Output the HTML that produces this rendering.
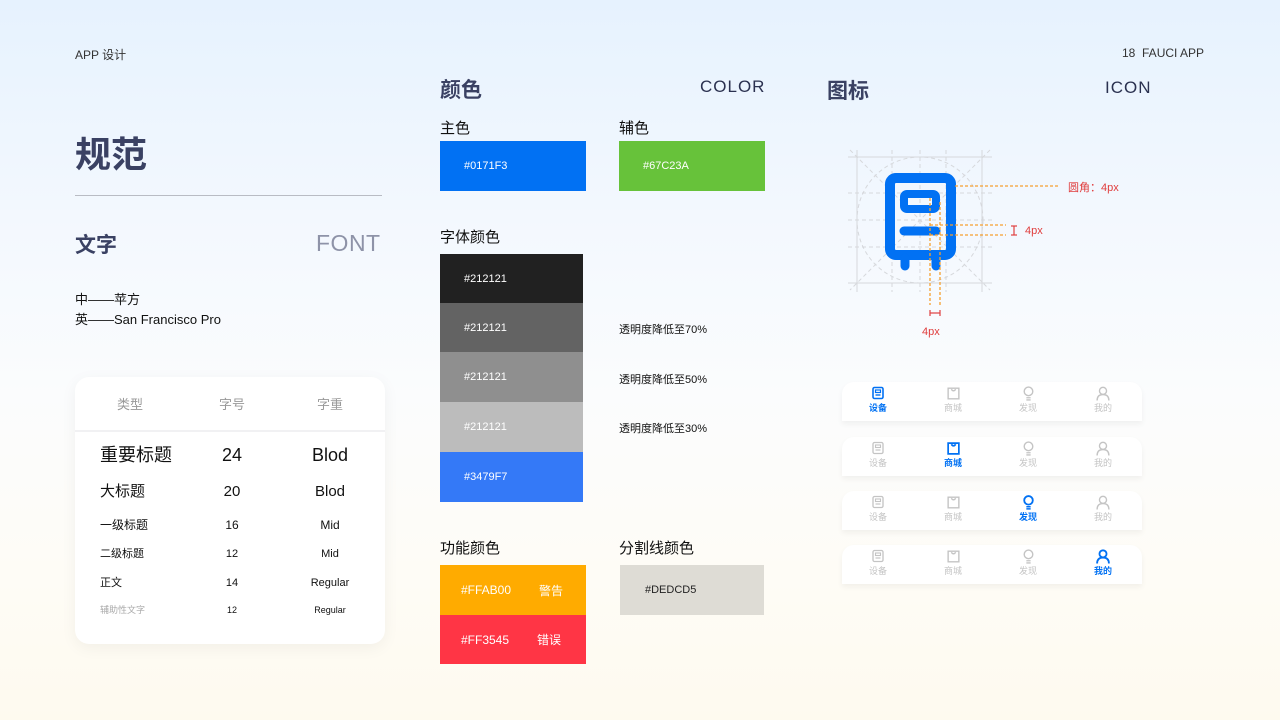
<!DOCTYPE html>
<html><head><meta charset="utf-8">
<style>
*{margin:0;padding:0;box-sizing:border-box}
body{width:1280px;height:720px;position:relative;overflow:hidden;font-family:"Liberation Sans","Noto Sans CJK SC",sans-serif;background:linear-gradient(180deg,#e6f2fe 0%,#f3f8fe 30%,#fbfcfd 55%,#fefcf6 80%,#fefaef 100%);color:#111}
.a{position:absolute;white-space:nowrap}
.h{font-weight:bold;color:#3a4163}
.sw{position:absolute;color:#fff;font-size:11px;display:flex;align-items:center}
.card{position:absolute;left:75px;top:377px;width:310px;height:267px;background:#fff;border-radius:14px;box-shadow:0 4px 16px rgba(0,0,0,0.05)}
.card div{line-height:var(--lh)}
.tc{position:absolute;text-align:center;transform:translateX(-50%)}
.tab{position:absolute;left:842px;width:300px;height:39px;background:#fff;border-radius:12px 12px 0 0;box-shadow:0 3px 6px rgba(0,0,0,0.05)}
.ti{position:absolute;width:40px;margin-left:-20px;text-align:center;font-size:9px;color:#c4c4c4;top:1px}
.ti svg{display:block;margin:3px auto 0}
.ti.on{color:#0171f3;font-weight:bold}
</style></head><body>
<div class="a" style="left:75px;top:46px;font-size:12px;color:#333">APP 设计</div>
<div class="a" style="left:1122px;top:46px;font-size:12px;color:#333">18&nbsp; FAUCI APP</div>
<div class="a h" style="left:75px;top:133px;font-size:36px;line-height:44px">规范</div>
<div class="a" style="left:75px;top:195px;width:307px;height:1px;background:#b9bcc4"></div>
<div class="a h" style="left:75px;top:229px;font-size:21px">文字</div>
<div class="a" style="left:316px;top:230px;font-size:23px;color:#8e93a8;letter-spacing:0.5px">FONT</div>
<div class="a" style="left:75px;top:290px;font-size:13px;line-height:20px">中——苹方<br>英——San Francisco Pro</div>

<div class="card">
<div class="tc" style="left:55px;top:20px;font-size:13px;color:#999;--lh:16px">类型</div>
<div class="tc" style="left:157px;top:20px;font-size:13px;color:#999;--lh:16px">字号</div>
<div class="tc" style="left:255px;top:20px;font-size:13px;color:#999;--lh:16px">字重</div>
<div style="position:absolute;left:0;right:0;top:53px;height:2px;background:#f1f1f3"></div>
<div class="a" style="left:25px;top:66px;font-size:18px;--lh:24px">重要标题</div>
<div class="tc" style="left:157px;top:66px;font-size:18px;--lh:24px">24</div>
<div class="tc" style="left:255px;top:66px;font-size:18px;--lh:24px">Blod</div>
<div class="a" style="left:25px;top:105px;font-size:15px;--lh:20px">大标题</div>
<div class="tc" style="left:157px;top:105px;font-size:15px;--lh:20px">20</div>
<div class="tc" style="left:255px;top:105px;font-size:15px;--lh:20px">Blod</div>
<div class="a" style="left:25px;top:140px;font-size:12px;--lh:16px">一级标题</div>
<div class="tc" style="left:157px;top:140px;font-size:12px;--lh:16px">16</div>
<div class="tc" style="left:255px;top:140px;font-size:12px;--lh:16px">Mid</div>
<div class="a" style="left:25px;top:170px;font-size:11px;--lh:14px">二级标题</div>
<div class="tc" style="left:157px;top:170px;font-size:11px;--lh:14px">12</div>
<div class="tc" style="left:255px;top:170px;font-size:11px;--lh:14px">Mid</div>
<div class="a" style="left:25px;top:199px;font-size:11px;--lh:14px">正文</div>
<div class="tc" style="left:157px;top:199px;font-size:11px;--lh:14px">14</div>
<div class="tc" style="left:255px;top:199px;font-size:11px;--lh:14px">Regular</div>
<div class="a" style="left:25px;top:227px;font-size:9px;color:#aaa;--lh:12px">辅助性文字</div>
<div class="tc" style="left:157px;top:227px;font-size:9px;--lh:12px">12</div>
<div class="tc" style="left:255px;top:227px;font-size:9px;--lh:12px">Regular</div>
</div>

<div class="a h" style="left:440px;top:74px;font-size:21px">颜色</div>
<div class="a" style="left:700px;top:77px;font-size:17px;color:#2b3150;letter-spacing:1px">COLOR</div>
<div class="a" style="left:440px;top:117px;font-size:15px">主色</div>
<div class="a" style="left:619px;top:117px;font-size:15px">辅色</div>
<div class="sw" style="left:440px;top:141px;width:146px;height:50px;background:#0171f3;padding-left:24px">#0171F3</div>
<div class="sw" style="left:619px;top:141px;width:146px;height:50px;background:#67c23a;padding-left:24px">#67C23A</div>
<div class="a" style="left:440px;top:226px;font-size:15px">字体颜色</div>
<div class="sw" style="left:440px;top:254px;width:143px;height:49px;background:#212121;padding-left:24px">#212121</div>
<div class="sw" style="left:440px;top:303px;width:143px;height:49px;background:#636363;padding-left:24px">#212121</div>
<div class="sw" style="left:440px;top:352px;width:143px;height:50px;background:#8f8f8f;padding-left:24px">#212121</div>
<div class="sw" style="left:440px;top:402px;width:143px;height:50px;background:#bcbcbc;padding-left:24px">#212121</div>
<div class="sw" style="left:440px;top:452px;width:143px;height:50px;background:#3479f7;padding-left:24px">#3479F7</div>
<div class="a" style="left:619px;top:321px;font-size:11px">透明度降低至70%</div>
<div class="a" style="left:619px;top:371px;font-size:11px">透明度降低至50%</div>
<div class="a" style="left:619px;top:420px;font-size:11px">透明度降低至30%</div>
<div class="a" style="left:440px;top:537px;font-size:15px">功能颜色</div>
<div class="a" style="left:619px;top:537px;font-size:15px">分割线颜色</div>
<div class="sw" style="left:440px;top:565px;width:146px;height:50px;background:#ffab00;padding-left:21px;font-size:12px">#FFAB00<span style="margin-left:28px">警告</span></div>
<div class="sw" style="left:440px;top:615px;width:146px;height:49px;background:#ff3545;padding-left:21px;font-size:12px">#FF3545<span style="margin-left:28px">错误</span></div>
<div class="sw" style="left:620px;top:565px;width:144px;height:50px;background:#dedcd5;color:#222;padding-left:25px">#DEDCD5</div>

<div class="a h" style="left:827px;top:75px;font-size:21px">图标</div>
<div class="a" style="left:1105px;top:78px;font-size:17px;color:#2b3150;letter-spacing:1px">ICON</div>

<svg class="a" style="left:830px;top:140px" width="320" height="200" viewBox="830 140 320 200">
<g stroke="#d6d8dc" stroke-width="1" fill="none">
<line x1="848" y1="157" x2="992" y2="157"/><line x1="848" y1="283" x2="992" y2="283"/>
<line x1="857" y1="150" x2="857" y2="292"/><line x1="982" y1="150" x2="982" y2="292"/>
<g stroke-dasharray="4 3"><line x1="848" y1="193" x2="992" y2="193"/><line x1="848" y1="220" x2="992" y2="220"/><line x1="848" y1="247" x2="992" y2="247"/>
<line x1="892" y1="150" x2="892" y2="292"/><line x1="920" y1="150" x2="920" y2="292"/><line x1="946" y1="150" x2="946" y2="292"/>
<circle cx="920" cy="220" r="63"/><line x1="850" y1="150" x2="990" y2="290"/><line x1="990" y1="150" x2="850" y2="290"/></g>
</g>
<rect x="890" y="178" width="61" height="77" rx="6" fill="none" stroke="#0171f3" stroke-width="10"/>
<line x1="905" y1="258" x2="905" y2="266" stroke="#0171f3" stroke-width="9" stroke-linecap="round"/>
<line x1="936" y1="258" x2="936" y2="266" stroke="#0171f3" stroke-width="9" stroke-linecap="round"/>
<rect x="904" y="194" width="32" height="15" rx="3" fill="none" stroke="#0171f3" stroke-width="8"/>
<line x1="904" y1="231" x2="936" y2="231" stroke="#0171f3" stroke-width="9" stroke-linecap="round"/>
<g stroke="#f5a030" stroke-width="1.3" stroke-dasharray="3 2" fill="none">
<line x1="955" y1="186" x2="1058" y2="186"/>
<line x1="930" y1="225" x2="1006" y2="225"/><line x1="930" y1="235" x2="1006" y2="235"/>
<line x1="930" y1="198" x2="930" y2="305"/><line x1="940" y1="202" x2="940" y2="305"/>
</g>
<g stroke="#e04040" stroke-width="1.2" fill="none"><line x1="1014" y1="226" x2="1014" y2="235"/><line x1="1011" y1="226" x2="1017" y2="226"/><line x1="1011" y1="235" x2="1017" y2="235"/>
<line x1="930" y1="313" x2="940" y2="313"/><line x1="930" y1="310" x2="930" y2="316"/><line x1="940" y1="310" x2="940" y2="316"/></g>
<text x="1068" y="191" font-size="11" fill="#e03c3c" font-family="Liberation Sans,Noto Sans CJK SC,sans-serif">圆角：4px</text>
<text x="1025" y="234" font-size="11" fill="#e03c3c" font-family="Liberation Sans,sans-serif">4px</text>
<text x="922" y="335" font-size="11" fill="#e03c3c" font-family="Liberation Sans,sans-serif">4px</text>
</svg>

<div class="tab" style="top:382px">
<div class="ti on" style="left:36px"><svg width="12" height="15" viewBox="0 0 12 14"><rect x="1" y="1" width="10" height="11" rx="1.5" fill="none" stroke="currentColor" stroke-width="1.6"/><rect x="3.5" y="3.5" width="5" height="2.5" fill="none" stroke="currentColor" stroke-width="1.2"/><line x1="3.5" y1="8.5" x2="8.5" y2="8.5" stroke="currentColor" stroke-width="1.4"/></svg>设备</div>
<div class="ti" style="left:111px"><svg width="15" height="15" viewBox="0 0 14 14"><path d="M2 2h10v10H2z M5 3q2 3 4 0" fill="none" stroke="currentColor" stroke-width="1.3"/></svg>商城</div>
<div class="ti" style="left:186px"><svg width="13" height="15" viewBox="0 0 12 14"><circle cx="6" cy="5" r="4" fill="none" stroke="currentColor" stroke-width="1.3"/><path d="M4 11h4M4 13h4" stroke="currentColor" stroke-width="1.2"/></svg>发现</div>
<div class="ti" style="left:261px"><svg width="14" height="15" viewBox="0 0 13 14"><circle cx="6.5" cy="4.5" r="3.3" fill="none" stroke="currentColor" stroke-width="1.3"/><path d="M1 13.5q0-5.5 5.5-5.5t5.5 5.5" fill="none" stroke="currentColor" stroke-width="1.3"/></svg>我的</div>
</div>
<div class="tab" style="top:437px">
<div class="ti" style="left:36px"><svg width="12" height="15" viewBox="0 0 12 14"><rect x="1" y="1" width="10" height="11" rx="1.5" fill="none" stroke="currentColor" stroke-width="1.3"/><rect x="3.5" y="3.5" width="5" height="2.5" fill="none" stroke="currentColor" stroke-width="1.1"/><line x1="3.5" y1="8.5" x2="8.5" y2="8.5" stroke="currentColor" stroke-width="1.2"/></svg>设备</div>
<div class="ti on" style="left:111px"><svg width="15" height="15" viewBox="0 0 14 14"><path d="M2 2h10v10H2z M5 3q2 3 4 0" fill="none" stroke="currentColor" stroke-width="1.6"/></svg>商城</div>
<div class="ti" style="left:186px"><svg width="13" height="15" viewBox="0 0 12 14"><circle cx="6" cy="5" r="4" fill="none" stroke="currentColor" stroke-width="1.3"/><path d="M4 11h4M4 13h4" stroke="currentColor" stroke-width="1.2"/></svg>发现</div>
<div class="ti" style="left:261px"><svg width="14" height="15" viewBox="0 0 13 14"><circle cx="6.5" cy="4.5" r="3.3" fill="none" stroke="currentColor" stroke-width="1.3"/><path d="M1 13.5q0-5.5 5.5-5.5t5.5 5.5" fill="none" stroke="currentColor" stroke-width="1.3"/></svg>我的</div>
</div>
<div class="tab" style="top:491px">
<div class="ti" style="left:36px"><svg width="12" height="15" viewBox="0 0 12 14"><rect x="1" y="1" width="10" height="11" rx="1.5" fill="none" stroke="currentColor" stroke-width="1.3"/><rect x="3.5" y="3.5" width="5" height="2.5" fill="none" stroke="currentColor" stroke-width="1.1"/><line x1="3.5" y1="8.5" x2="8.5" y2="8.5" stroke="currentColor" stroke-width="1.2"/></svg>设备</div>
<div class="ti" style="left:111px"><svg width="15" height="15" viewBox="0 0 14 14"><path d="M2 2h10v10H2z M5 3q2 3 4 0" fill="none" stroke="currentColor" stroke-width="1.3"/></svg>商城</div>
<div class="ti on" style="left:186px"><svg width="13" height="15" viewBox="0 0 12 14"><circle cx="6" cy="5" r="4" fill="none" stroke="currentColor" stroke-width="1.7"/><path d="M4 11h4M4 13h4" stroke="currentColor" stroke-width="1.4"/></svg>发现</div>
<div class="ti" style="left:261px"><svg width="14" height="15" viewBox="0 0 13 14"><circle cx="6.5" cy="4.5" r="3.3" fill="none" stroke="currentColor" stroke-width="1.3"/><path d="M1 13.5q0-5.5 5.5-5.5t5.5 5.5" fill="none" stroke="currentColor" stroke-width="1.3"/></svg>我的</div>
</div>
<div class="tab" style="top:545px">
<div class="ti" style="left:36px"><svg width="12" height="15" viewBox="0 0 12 14"><rect x="1" y="1" width="10" height="11" rx="1.5" fill="none" stroke="currentColor" stroke-width="1.3"/><rect x="3.5" y="3.5" width="5" height="2.5" fill="none" stroke="currentColor" stroke-width="1.1"/><line x1="3.5" y1="8.5" x2="8.5" y2="8.5" stroke="currentColor" stroke-width="1.2"/></svg>设备</div>
<div class="ti" style="left:111px"><svg width="15" height="15" viewBox="0 0 14 14"><path d="M2 2h10v10H2z M5 3q2 3 4 0" fill="none" stroke="currentColor" stroke-width="1.3"/></svg>商城</div>
<div class="ti" style="left:186px"><svg width="13" height="15" viewBox="0 0 12 14"><circle cx="6" cy="5" r="4" fill="none" stroke="currentColor" stroke-width="1.3"/><path d="M4 11h4M4 13h4" stroke="currentColor" stroke-width="1.2"/></svg>发现</div>
<div class="ti on" style="left:261px"><svg width="14" height="15" viewBox="0 0 13 14"><circle cx="6.5" cy="4.5" r="3.3" fill="none" stroke="currentColor" stroke-width="1.7"/><path d="M1 13.5q0-5.5 5.5-5.5t5.5 5.5" fill="none" stroke="currentColor" stroke-width="1.7"/></svg>我的</div>
</div>
</body></html>
